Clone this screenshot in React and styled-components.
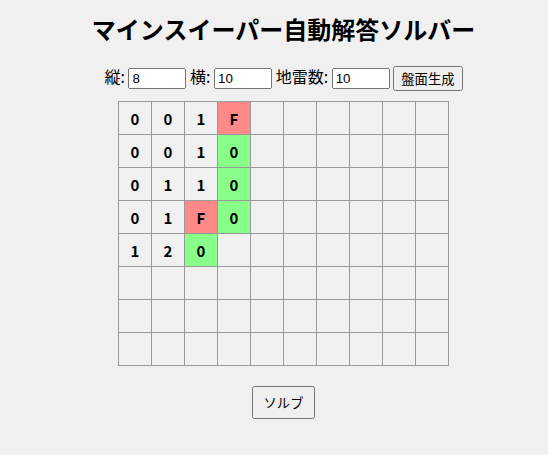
import React from "react";
import styled, { createGlobalStyle } from "styled-components";

const Global = createGlobalStyle`
  html, body { margin: 0; padding: 0; background: #f0f0f0; }
  body { font-family: "Noto Sans CJK JP", "Noto Sans", sans-serif; color: #000; }
`;

const Page = styled.div`
  display: flex;
  flex-direction: column;
  align-items: center;
  padding-left: 19px;
  width: 548px;
  box-sizing: border-box;
`;

const Title = styled.h1`
  font-size: 24px;
  font-weight: 700;
  line-height: 34px;
  margin: 12px 0 0;
`;

const Controls = styled.div`
  margin-top: 18px;
  font-size: 16px;
  line-height: 25px;
  white-space: nowrap;
`;

const Label = styled.label`
  font-size: 16px;
`;

const NumInput = styled.input`
  width: 50px;
  font-family: "Liberation Sans", Arial, sans-serif;
  font-size: 13.33px;
  vertical-align: middle;
`;

const Button = styled.button`
  font-family: "Noto Sans CJK JP", sans-serif;
  font-size: 13.33px;
  padding: ${(p) => (p.$big ? "5px 10px" : "1px 6px")};
  vertical-align: middle;
`;

const Board = styled.div`
  margin-top: 10px;
  display: grid;
  grid-template-columns: repeat(10, 32px);
  grid-auto-rows: 32px;
  gap: 1px;
  padding: 1px;
  background: #999;
`;

const Cell = styled.div`
  display: flex;
  align-items: center;
  justify-content: center;
  font-size: 15px;
  font-weight: 700;
  background: ${(p) => (p.$kind === "flag" ? "#ff8888" : p.$kind === "safe" ? "#88ff88" : "#f0f0f0")};
`;

const SolveRow = styled.div`
  margin-top: 20px;
`;

const board = [
  ["0", "0", "1", "F"],
  ["0", "0", "1", "G"],
  ["0", "1", "1", "G"],
  ["0", "1", "F", "G"],
  ["1", "2", "G"],
];

export default function App() {
  const cells = [];
  for (let r = 0; r < 8; r++) {
    for (let c = 0; c < 10; c++) {
      const v = (board[r] && board[r][c]) || "";
      const kind = v === "F" ? "flag" : v === "G" ? "safe" : "none";
      const text = v === "G" ? "0" : v;
      cells.push(
        <Cell key={`${r}-${c}`} $kind={kind}>
          {text}
        </Cell>
      );
    }
  }
  return (
    <>
      <Global />
      <Page>
        <Title>マインスイーパー自動解答ソルバー</Title>
        <Controls>
          <Label>縦:</Label> <NumInput type="number" defaultValue="8" />{" "}
          <Label>横:</Label> <NumInput type="number" defaultValue="10" />{" "}
          <Label>地雷数:</Label> <NumInput type="number" defaultValue="10" />{" "}
          <Button>盤面生成</Button>
        </Controls>
        <Board>{cells}</Board>
        <SolveRow>
          <Button $big>ソルブ</Button>
        </SolveRow>
      </Page>
    </>
  );
}
